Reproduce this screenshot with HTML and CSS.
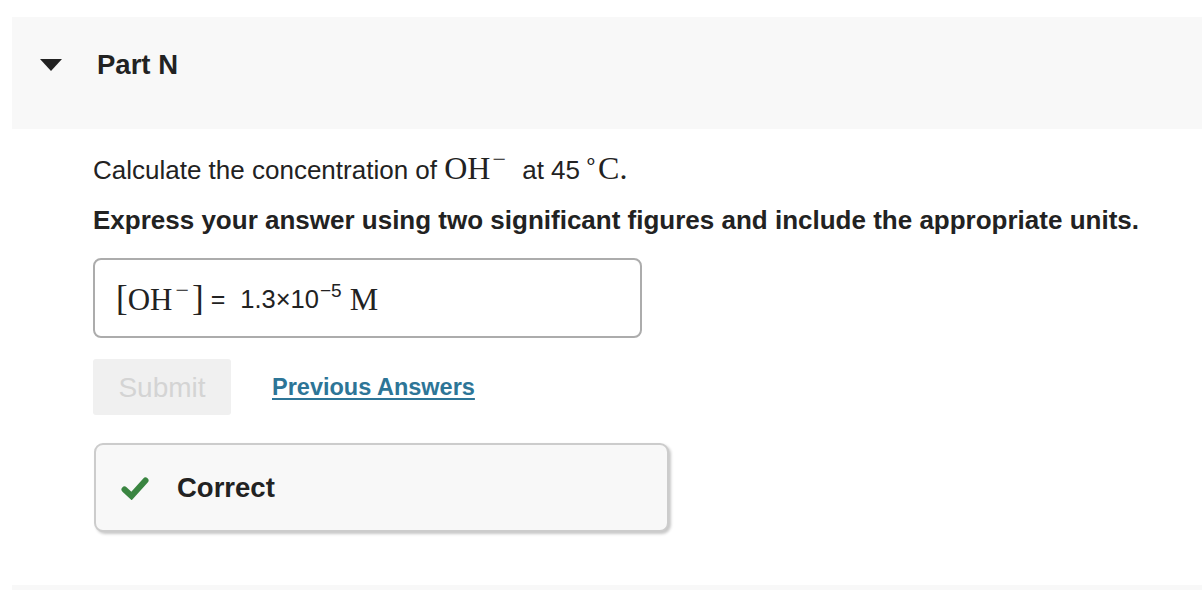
FILE: index.html
```html
<!DOCTYPE html>
<html>
<head>
<meta charset="utf-8">
<link rel="stylesheet" href="styles.css">
</head>
<body>
<div class="page">
  <div class="part-header">
    <span class="caret"></span>
    <h2 class="part-title">Part N</h2>
  </div>
  <div class="part-body">
    <p class="question">Calculate the concentration of <span class="math">OH<sup class="msup">−</sup></span> at 45<span class="math"><sup class="deg">∘</sup>C.</span></p>
    <p class="instruction">Express your answer using two significant figures and include the appropriate units.</p>
    <div class="answer-box">
      <span class="math lhs"><span class="brk">[</span>OH<sup class="msup">−</sup><span class="brk">]</span></span>
      <span class="eq">=</span>
      <span class="value">1.3×10<sup class="exp">−5</sup></span>
      <span class="math unit">M</span>
    </div>
    <div class="actions">
      <button class="submit" disabled>Submit</button>
      <a class="prev-link" href="#">Previous Answers</a>
    </div>
    <div class="feedback">
      <svg class="check" width="28" height="24" viewBox="0 0 28 24"><path d="M3.5 13.5 L10.5 20 L24.5 4.5" fill="none" stroke="#3a8541" stroke-width="6" stroke-linecap="round" stroke-linejoin="miter"/></svg>
      <span class="feedback-text">Correct</span>
    </div>
  </div>
  <div class="next-part"></div>
</div>
</body>
</html>
```
FILE: styles.css
```css
html, body {
  margin: 0;
  padding: 0;
  background: #ffffff;
}
body {
  font-family: "Liberation Sans", Arial, Helvetica, sans-serif;
  color: #222222;
}
.page {
  padding: 17px 0 0 12px;
}
.part-header {
  box-sizing: border-box;
  height: 112px;
  background: #f8f8f8;
  display: flex;
  align-items: center;
  padding-left: 28px;
  padding-bottom: 17px;
}
.caret {
  width: 0;
  height: 0;
  border-left: 11px solid transparent;
  border-right: 11px solid transparent;
  border-top: 12px solid #222222;
  margin-right: 35px;
  margin-top: 1px;
}
.part-title {
  margin: 0;
  font-size: 27.5px;
  font-weight: bold;
  color: #222222;
}
.part-body {
  padding-left: 81px;
  padding-top: 19px;
}
.question {
  margin: 0;
  font-size: 26px;
  line-height: 40px;
  color: #222222;
}
.math {
  font-family: "Liberation Serif", "Times New Roman", serif;
  font-size: 32px;
}
.msup {
  font-size: 24px;
  vertical-align: 12px;
  line-height: 0;
  margin-left: 2px;
  margin-right: 9px;
}
.deg {
  font-size: 22px;
  font-weight: 300;
  vertical-align: 11px;
  line-height: 0;
  margin-left: 4px;
  margin-right: 0;
}
.instruction {
  margin: 10px 0 0 0;
  font-size: 26px;
  line-height: 40px;
  font-weight: bold;
  color: #222222;
}
.answer-box {
  box-sizing: border-box;
  width: 549px;
  height: 80px;
  margin-top: 18px;
  border: 2px solid #acacac;
  border-radius: 8px;
  display: flex;
  align-items: center;
  padding-left: 21px;
  padding-top: 2px;
}
.answer-box .lhs {
  font-size: 31px;
}
.answer-box .msup {
  margin-left: 3px;
  margin-right: 3px;
}
.brk {
  font-size: 35px;
  font-weight: 300;
}
.eq {
  font-size: 25px;
  margin-left: 7px;
  margin-right: 15px;
}
.value {
  font-size: 25.5px;
}
.exp {
  font-size: 19px;
  vertical-align: 11px;
  line-height: 0;
  margin-left: 1px;
}
.unit {
  font-size: 32px;
  margin-left: 8px;
}
.actions {
  display: flex;
  align-items: center;
  margin-top: 21px;
}
.submit {
  width: 138px;
  height: 56px;
  border: none;
  border-radius: 3px;
  background: #f0f0f0;
  color: #d4d4d4;
  font-family: "Liberation Sans", Arial, sans-serif;
  font-size: 28px;
  padding: 0;
  padding-top: 2px;
}
.prev-link {
  margin-left: 41px;
  font-size: 23.5px;
  font-weight: bold;
  color: #2d7597;
  text-decoration: underline;
  text-underline-offset: 3px;
  text-decoration-thickness: 2px;
}
.feedback {
  box-sizing: border-box;
  width: 575px;
  height: 89px;
  margin-top: 28px;
  margin-left: 1px;
  background: #f8f8f8;
  border: 2px solid #cccccc;
  border-radius: 9px;
  box-shadow: 2px 2px 3px rgba(0, 0, 0, 0.22);
  display: flex;
  align-items: center;
  padding-left: 25px;
}
.check {
  margin-right: 28px;
  margin-top: 1px;
}
.feedback-text {
  font-size: 27.5px;
  font-weight: bold;
  color: #222222;
}
.next-part {
  margin-top: 53px;
  height: 10px;
  background: #f8f8f8;
}
```
